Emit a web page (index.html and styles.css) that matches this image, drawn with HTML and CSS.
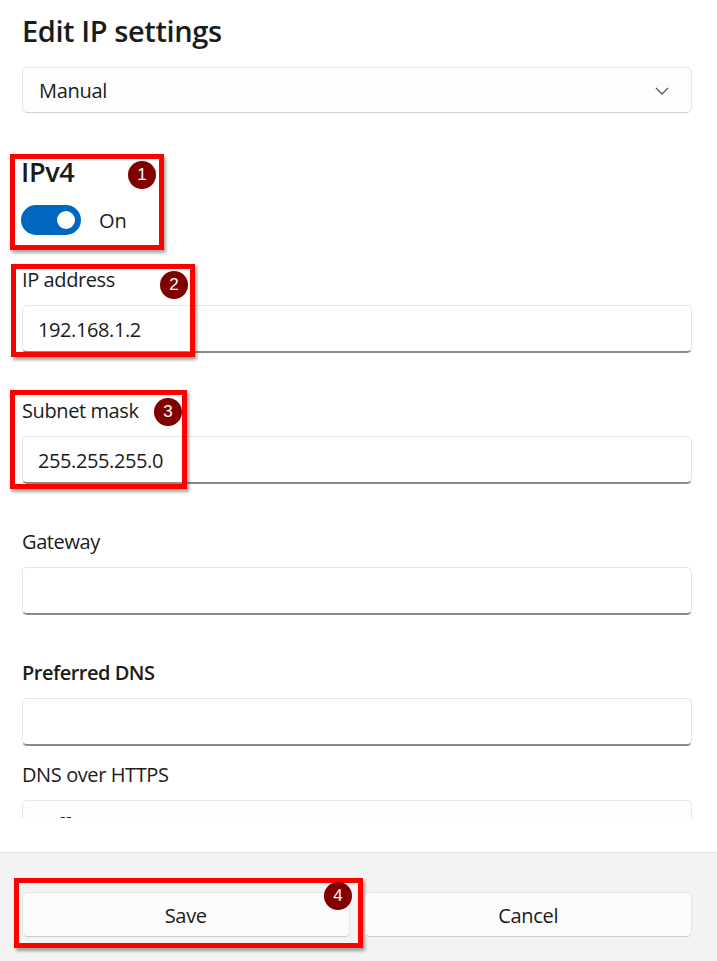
FILE: index.html
```html
<!DOCTYPE html>
<html lang="en">
<head>
<meta charset="utf-8">
<title>Edit IP settings</title>
<link rel="stylesheet" href="styles.css">
</head>
<body>
<div class="window">
  <div class="scroll">
    <h1 class="title">Edit IP settings</h1>
    <div class="select">
      <span>Manual</span>
      <svg class="chevron" width="14" height="8" viewBox="0 0 14 8"><path d="M1 1 L7 7 L13 1" fill="none" stroke="#5c5c5c" stroke-width="1.4"/></svg>
    </div>

    <section class="ipv4">
      <h2 class="subtitle">IPv4</h2>
      <div class="toggle-row">
        <span class="toggle"><span class="knob"></span></span>
        <span class="toggle-label">On</span>
      </div>
      <span class="mark mark-1"></span>
      <span class="badge badge-1">1</span>
    </section>

    <div class="field field-ip">
      <label class="label">IP address</label>
      <div class="input">192.168.1.2</div>
      <span class="mark mark-2"></span>
      <span class="badge badge-2">2</span>
    </div>

    <div class="field field-gap">
      <label class="label">Subnet mask</label>
      <div class="input">255.255.255.0</div>
      <span class="mark mark-3"></span>
      <span class="badge badge-3">3</span>
    </div>

    <div class="field field-gap">
      <label class="label">Gateway</label>
      <div class="input"></div>
    </div>

    <div class="field field-gap">
      <label class="label label-strong">Preferred DNS</label>
      <div class="input"></div>
    </div>

    <div class="field field-sub">
      <label class="label">DNS over HTTPS</label>
      <div class="input input-select">Off</div>
    </div>
  </div>
  <div class="spacer"></div>
  <footer class="footer">
    <div class="btn-wrap">
      <button class="btn">Save</button>
      <span class="mark mark-4"></span>
      <span class="badge badge-4">4</span>
    </div>
    <div class="btn-wrap">
      <button class="btn">Cancel</button>
    </div>
  </footer>
</div>
</body>
</html>
```

FILE: styles.css
```css
* { box-sizing: border-box; }
html, body { margin: 0; padding: 0; background: #ffffff; }
body {
  font-family: "Open Sans", "Noto Sans", sans-serif;
  color: #1b1b1b;
}
.window {
  width: 717px;
  height: 961px;
  display: flex;
  flex-direction: column;
  overflow: hidden;
}
.scroll {
  height: 818px;
  overflow: hidden;
  padding: 9px 25px 0 22px;
  flex: none;
}
.title {
  margin: 0;
  font-size: 29px;
  line-height: 41px;
  padding-top: 1px;
  height: 40px;
  font-weight: 600;
  letter-spacing: -0.4px;
}
.select {
  margin-top: 18px;
  height: 46px;
  border: 1px solid #e6e6e6;
  border-bottom-color: #d3d3d3;
  border-radius: 5px;
  background: #fdfdfd;
  display: flex;
  align-items: center;
  justify-content: space-between;
  padding: 1px 22px 0 16px;
  font-size: 20px;
  letter-spacing: -0.3px;
}
.chevron { display: block; }
.ipv4 {
  position: relative;
  margin-top: 41px;
}
.subtitle {
  margin: 0 0 0 -1px;
  font-size: 27px;
  line-height: 36px;
  font-weight: 600;
  letter-spacing: -0.3px;
}
.toggle-row {
  margin-top: 15px;
  height: 30px;
  display: flex;
  align-items: center;
  gap: 18px;
  margin-left: -1px;
}
.toggle {
  width: 60px;
  height: 30px;
  border-radius: 15px;
  background: #0067c0;
  display: flex;
  align-items: center;
  justify-content: flex-end;
  padding-right: 6px;
}
.knob {
  width: 18px;
  height: 18px;
  border-radius: 50%;
  background: #ffffff;
}
.toggle-label {
  font-size: 20px;
  line-height: 30px;
  padding-top: 2px;
}
.field { position: relative; }
.field-ip { margin-top: 30px; }
.field-gap { margin-top: 43px; }
.field-sub { margin-top: 14px; }
.label {
  display: block;
  font-size: 20px;
  line-height: 28px;
  height: 28px;
  padding-top: 1px;
  letter-spacing: -0.4px;
}
.label-strong { font-weight: 600; letter-spacing: -0.5px; }
.input {
  margin-top: 12px;
  height: 48px;
  border: 1px solid #e6e6e6;
  border-bottom: 2px solid #8a8a8a;
  border-radius: 5px;
  background: #ffffff;
  display: flex;
  align-items: center;
  padding: 1px 15px 0 15px;
  font-size: 20px;
  letter-spacing: -0.4px;
}
.input-select {
  border-bottom: 1px solid #d3d3d3;
  background: #fdfdfd;
  padding-left: 19px;
}
.mark {
  position: absolute;
  border: 5px solid #ff0000;
  box-shadow: 2px 3px 3px rgba(0, 0, 0, 0.35);
  pointer-events: none;
}
.badge {
  position: absolute;
  width: 28px;
  height: 28px;
  border-radius: 50%;
  background: #800000;
  color: #ffffff;
  font-family: "Liberation Sans", Arial, sans-serif;
  font-size: 17px;
  line-height: 28px;
  text-align: center;
}
.mark-1 { left: -12px; top: 0; width: 154px; height: 96px; }
.badge-1 { left: 106px; top: 7px; }
.mark-2 { left: -11px; top: -1px; width: 184px; height: 93px; }
.badge-2 { left: 138px; top: 6px; }
.mark-3 { left: -12px; top: -6px; width: 177px; height: 99px; }
.badge-3 { left: 132px; top: 2px; }
.spacer {
  flex: none;
  height: 35px;
  border-bottom: 1px solid #e5e5e5;
}
.footer {
  flex: 1;
  background: #f3f3f3;
  padding: 39px 25px 0 22px;
  display: flex;
  gap: 15px;
}
.btn-wrap {
  position: relative;
  flex: 1;
}
.btn {
  display: block;
  width: 100%;
  height: 45px;
  border: 1px solid #e5e5e5;
  border-bottom-color: #cccccc;
  border-radius: 5px;
  background: #fbfbfb;
  font-family: "Open Sans", "Noto Sans", sans-serif;
  font-size: 20px;
  color: #1b1b1b;
  letter-spacing: -0.3px;
  padding: 1px 0 0 0;
}
.mark-4 { left: -8px; top: -14px; width: 349px; height: 70px; }
.badge-4 { left: 302px; top: -10px; }
```
